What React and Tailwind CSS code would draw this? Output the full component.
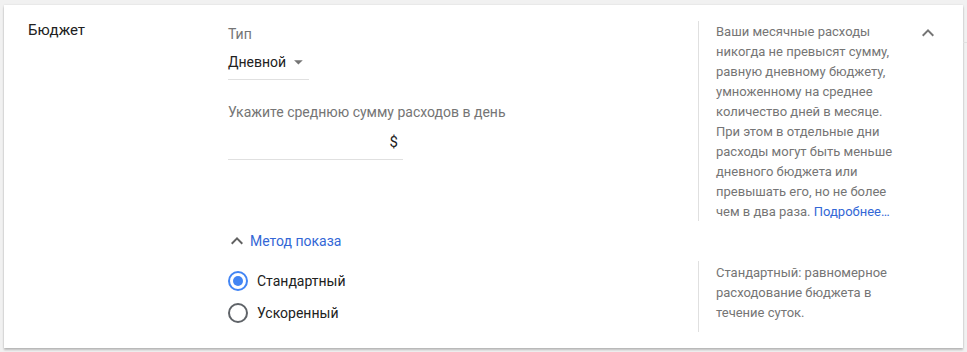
import React, { useState } from "react";

const FONT = { fontFamily: "Roboto, 'Noto Sans', Arial, sans-serif" };

function ExpandLess({ className }) {
  return (
    <svg viewBox="0 0 24 24" className={className} fill="currentColor">
      <path d="M12 8l-6 6 1.41 1.41L12 10.83l4.59 4.58L18 14z" />
    </svg>
  );
}

function ArrowDrop({ className }) {
  return (
    <svg viewBox="0 0 24 24" className={className} fill="currentColor">
      <path d="M7 10l5 5 5-5z" />
    </svg>
  );
}

function Radio({ checked, label, onClick }) {
  return (
    <button onClick={onClick} className="flex h-[32px] items-center text-left">
      <span
        className={`flex h-[20px] w-[20px] items-center justify-center rounded-full border-2 ${
          checked ? "border-[#4285f4]" : "border-[#5f6368]"
        }`}
      >
        {checked && <span className="h-[10px] w-[10px] rounded-full bg-[#4285f4]" />}
      </span>
      <span className="ml-[9px] text-[14px] leading-[20px] text-[#212121]">{label}</span>
    </button>
  );
}

export default function App() {
  const [method, setMethod] = useState("standard");

  return (
    <div className="flex min-h-screen bg-[#f1f1f1] pl-[4px] pt-[5px]" style={FONT}>
      <div className="flex h-[343px] w-[959px] bg-white shadow-[0_2px_2px_rgba(0,0,0,0.22),0_0_2px_rgba(0,0,0,0.1)]">
        {/* Label */}
        <div className="w-[224px] pl-[24px] pt-[13px]">
          <span className="text-[15px] leading-[20px] text-[#212121]">Бюджет</span>
        </div>

        {/* Body */}
        <div className="flex flex-col pt-[15px]">
          <div className="flex">
            <div className="w-[470px]">
              <div className="mt-[4px] text-[14px] leading-[20px] text-[#757575]">Тип</div>
              <div className="mt-[8px] flex w-[81px] items-center border-b border-[#e0e0e0] pb-[7px]">
                <span className="text-[14px] leading-[20px] text-[#212121]">Дневной</span>
                <ArrowDrop className="-my-[2px] ml-[2px] h-6 w-6 text-[#757575]" />
              </div>
              <div className="mt-[22px] text-[14px] leading-[20px] text-[#757575]">
                Укажите среднюю сумму расходов в день
              </div>
              <div className="mt-[10px] w-[175px] border-b border-[#e0e0e0] pb-[7px] pr-[5px] text-right text-[15px] leading-[20px] text-[#212121]">
                $
              </div>
            </div>

            <div className="mt-[1px] h-[200px] w-[194px] whitespace-nowrap border-l border-[#e0e0e0] pl-[17px] pt-[1px] text-[13px] leading-[20px] text-[#757575]">
              Ваши месячные расходы
              <br />
              никогда не превысят сумму,
              <br />
              равную дневному бюджету,
              <br />
              умноженному на среднее
              <br />
              количество дней в месяце.
              <br />
              При этом в отдельные дни
              <br />
              расходы могут быть меньше
              <br />
              дневного бюджета или
              <br />
              превышать его, но не более
              <br />
              чем в два раза.{" "}
              <a href="#" className="text-[#3367d6]">
                Подробнее…
              </a>
            </div>

            <div className="pl-[24px] pt-[1px]">
              <ExpandLess className="h-6 w-6 text-[#757575]" />
            </div>
          </div>

          <div className="mt-[10px] flex items-center">
            <ExpandLess className="-my-[2px] -ml-[3px] h-6 w-6 text-[#616161]" />
            <span className="ml-[1px] text-[14px] leading-[20px] text-[#3367d6]">Метод показа</span>
          </div>

          <div className="mt-[10px] flex">
            <div className="flex w-[470px] flex-col pt-[4px]">
              <Radio
                checked={method === "standard"}
                label="Стандартный"
                onClick={() => setMethod("standard")}
              />
              <Radio
                checked={method === "accelerated"}
                label="Ускоренный"
                onClick={() => setMethod("accelerated")}
              />
            </div>
            <div className="w-[194px] whitespace-nowrap border-l border-[#e0e0e0] pb-[9px] pl-[17px] pt-[2px] text-[13px] leading-[20px] text-[#757575]">
              Стандартный: равномерное
              <br />
              расходование бюджета в
              <br />
              течение суток.
            </div>
          </div>
        </div>
      </div>
      <div className="mt-[37px] h-0 w-[4px] border-t border-[#e0e0e0]" />
    </div>
  );
}
